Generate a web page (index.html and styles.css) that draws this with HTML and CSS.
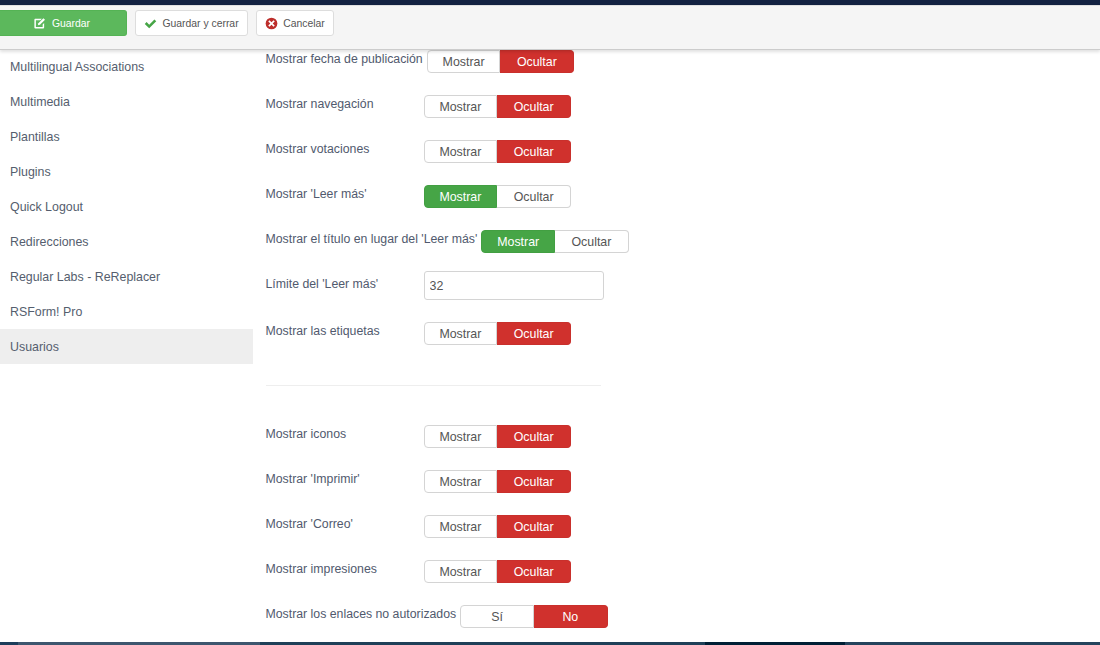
FILE: index.html
```html
<!DOCTYPE html>
<html lang="es">
<head>
<meta charset="utf-8">
<title>Guardar</title>
<link rel="stylesheet" href="styles.css">
</head>
<body>
<div class="topbar"></div>
<div class="toolbar">
  <button class="tbtn save"><svg class="ico" viewBox="0 0 14 14"><path d="M2.300 2h7.200L8 3.600H3.100v7.300h7.300V8l1.600-1.500v4.900a1.100 1.100 0 0 1-1.100 1.100H2.600a1.100 1.100 0 0 1-1.100-1.100V3.100A1.100 1.100 0 0 1 2.300 2z" fill="#fff"/><path d="M5.800 6.700 11.200 1.300l1.700 1.700-5.400 5.400-2.200.5z" fill="#fff"/></svg>Guardar</button>
  <button class="tbtn close"><svg class="ico" viewBox="0 0 14 14"><path d="M.8 7.500 2.800 5.500l2.800 2.800L11.200 2.600l2 2-7.600 7.600z" fill="#46a546"/></svg>Guardar y cerrar</button>
  <button class="tbtn cancel"><svg class="ico" viewBox="0 0 14 14"><circle cx="7" cy="7" r="6.300" fill="#bd2f2c"/><path d="M4.800 3.500 7 5.700l2.200-2.200 1.300 1.300L8.300 7l2.200 2.200-1.300 1.300L7 8.300l-2.200 2.200-1.300-1.300L5.700 7 3.500 4.800z" fill="#fff"/></svg>Cancelar</button>
</div>
<div class="main">
  <ul class="side">
    <li class="item">Multilingual Associations</li>
    <li class="item">Multimedia</li>
    <li class="item">Plantillas</li>
    <li class="item">Plugins</li>
    <li class="item">Quick Logout</li>
    <li class="item">Redirecciones</li>
    <li class="item">Regular Labs - ReReplacer</li>
    <li class="item">RSForm! Pro</li>
    <li class="item active">Usuarios</li>
  </ul>
  <div class="form">
    <div class="row"><label class="lbl">Mostrar fecha de publicación</label><div class="toggle"><span class="opt">Mostrar</span><span class="opt red">Ocultar</span></div></div>
    <div class="row"><label class="lbl">Mostrar navegación</label><div class="toggle"><span class="opt">Mostrar</span><span class="opt red">Ocultar</span></div></div>
    <div class="row"><label class="lbl">Mostrar votaciones</label><div class="toggle"><span class="opt">Mostrar</span><span class="opt red">Ocultar</span></div></div>
    <div class="row"><label class="lbl">Mostrar 'Leer más'</label><div class="toggle"><span class="opt green">Mostrar</span><span class="opt">Ocultar</span></div></div>
    <div class="row"><label class="lbl">Mostrar el título en lugar del 'Leer más'</label><div class="toggle"><span class="opt green">Mostrar</span><span class="opt">Ocultar</span></div></div>
    <div class="row row-input"><label class="lbl">Límite del 'Leer más'</label><input class="num" type="text" value="32"></div>
    <div class="row"><label class="lbl">Mostrar las etiquetas</label><div class="toggle"><span class="opt">Mostrar</span><span class="opt red">Ocultar</span></div></div>
    <hr class="sep">
    <div class="row"><label class="lbl">Mostrar iconos</label><div class="toggle"><span class="opt">Mostrar</span><span class="opt red">Ocultar</span></div></div>
    <div class="row"><label class="lbl">Mostrar 'Imprimir'</label><div class="toggle"><span class="opt">Mostrar</span><span class="opt red">Ocultar</span></div></div>
    <div class="row"><label class="lbl">Mostrar 'Correo'</label><div class="toggle"><span class="opt">Mostrar</span><span class="opt red">Ocultar</span></div></div>
    <div class="row"><label class="lbl">Mostrar impresiones</label><div class="toggle"><span class="opt">Mostrar</span><span class="opt red">Ocultar</span></div></div>
    <div class="row"><label class="lbl">Mostrar los enlaces no autorizados</label><div class="toggle"><span class="opt">Sí</span><span class="opt red">No</span></div></div>
  </div>
</div>
<div class="bottombar"><span class="seg s1"></span><span class="seg s2"></span><span class="seg s3"></span><span class="seg s4"></span><span class="seg s5"></span></div>
</body>
</html>
```
FILE: styles.css
```css
* { box-sizing: border-box; }
html, body { margin: 0; height: 645px; overflow: hidden; }
body { display: flex; flex-direction: column; background: #fff; color: #515a6e; font: 12.4px/18px "Liberation Sans", Arial, sans-serif; }
.topbar { height: 5px; background: #132242; flex: none; }
.toolbar { height: 45px; flex: none; display: flex; align-items: flex-start; gap: 8px; padding-top: 4px; background: #f5f5f5; border-top: 1px solid #e0e0e0; border-bottom: 1px solid #ccc; box-shadow: 0 2px 3px rgba(0,0,0,.12); position: relative; z-index: 2; }
.tbtn { height: 26px; display: flex; align-items: center; justify-content: center; gap: 5px; padding: 0; font: 10.4px "Liberation Sans", Arial, sans-serif; color: #555; background: #fff; border: 1px solid #ddd; border-radius: 3px; }
.save { width: 127px; padding-right: 3px; color: #fff; background: #5cb85c; border-color: #54b354; border-left: 0; border-radius: 0 3px 3px 0; gap: 6px; }
.close { width: 113px; }
.cancel { width: 78px; }
.ico { width: 13px; height: 13px; flex: none; }
.main { flex: 1; display: flex; min-height: 0; margin-top: -1px; }
.side { width: 253px; flex: none; list-style: none; margin: 0; padding: 0; }
.item { height: 35px; padding: 0 10px; display: flex; align-items: center; color: #555e6e; }
.active { background: #eee; }
.form { flex: 1; padding: 0 0 0 12.5px; }
.row { height: 23px; display: flex; gap: 4px; margin: 1px 0 22px; }
.lbl { min-width: 154px; white-space: nowrap; font-size: 12.3px; }
.toggle { display: flex; height: 23px; flex: none; }
.opt { width: 73.75px; display: flex; align-items: center; justify-content: center; background: #fff; color: #555; border: 1px solid #d4d4d4; border-radius: 4px 0 0 4px; }
.opt + .opt { border-left: 0; border-radius: 0 4px 4px 0; }
.red { background: #d0312d; border-color: #c9302c; color: #fff; }
.green { background: #46a546; border-color: #429f42; color: #fff; }
.row-input { height: 29px; margin-top: -4px; margin-bottom: 22px; }
.row-input .lbl { padding-top: 4px; }
.num { width: 180.5px; height: 29px; padding: 0 5px; font: 12.4px "Liberation Sans", Arial, sans-serif; color: #555; border: 1px solid #d4d4d4; border-radius: 3px; }
.sep { width: 335px; margin: 40px 0 39px; border: 0; border-top: 1px solid #eee; }
.bottombar { height: 3px; flex: none; display: flex; }
.seg { display: block; }
.s1 { width: 18px; background: #1c3d5a; }
.s2 { width: 242px; background: #3d566e; }
.s3 { width: 445px; background: #1f4058; }
.s4 { width: 140px; background: #001f35; }
.s5 { flex: 1; background: #24435c; }
```
